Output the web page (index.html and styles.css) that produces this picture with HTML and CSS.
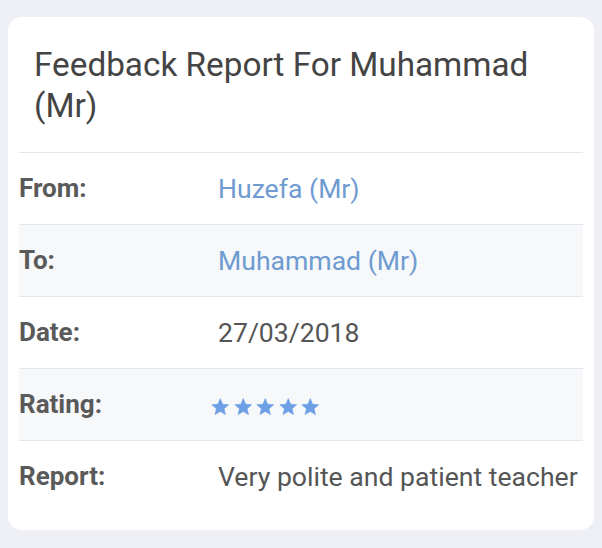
FILE: index.html
```html
<!DOCTYPE html>
<html>
<head>
<meta charset="utf-8">
<link rel="stylesheet" href="styles.css">
</head>
<body>
<div class="card">
  <h1 class="title">Feedback Report For Muhammad (Mr)</h1>
  <table class="details">
    <tr><th>From:</th><td><a class="link">Huzefa (Mr)</a></td></tr>
    <tr class="alt"><th>To:</th><td><a class="link">Muhammad (Mr)</a></td></tr>
    <tr><th>Date:</th><td>27/03/2018</td></tr>
    <tr class="alt"><th>Rating:</th><td>
      <div class="stars">
        <svg class="star" viewBox="0 0 24 23"><path d="M12 .8L15.06 8.09 22.94 8.75 16.95 13.91 18.76 21.6 12 17.5 5.24 21.6 7.05 13.91 1.06 8.75 8.94 8.09Z"/></svg>
        <svg class="star" viewBox="0 0 24 23"><path d="M12 .8L15.06 8.09 22.94 8.75 16.95 13.91 18.76 21.6 12 17.5 5.24 21.6 7.05 13.91 1.06 8.75 8.94 8.09Z"/></svg>
        <svg class="star" viewBox="0 0 24 23"><path d="M12 .8L15.06 8.09 22.94 8.75 16.95 13.91 18.76 21.6 12 17.5 5.24 21.6 7.05 13.91 1.06 8.75 8.94 8.09Z"/></svg>
        <svg class="star" viewBox="0 0 24 23"><path d="M12 .8L15.06 8.09 22.94 8.75 16.95 13.91 18.76 21.6 12 17.5 5.24 21.6 7.05 13.91 1.06 8.75 8.94 8.09Z"/></svg>
        <svg class="star" viewBox="0 0 24 23"><path d="M12 .8L15.06 8.09 22.94 8.75 16.95 13.91 18.76 21.6 12 17.5 5.24 21.6 7.05 13.91 1.06 8.75 8.94 8.09Z"/></svg>
      </div>
    </td></tr>
    <tr><th>Report:</th><td>Very polite and patient teacher</td></tr>
  </table>
</div>
</body>
</html>
```
FILE: styles.css
```css
html, body {
  margin: 0;
  background: #eef0f5;
}
body {
  padding: 17px 8px 16px 8px;
  font-family: Roboto, "Liberation Sans", sans-serif;
  color: #555;
}
.card {
  background: #fff;
  border-radius: 14px;
  padding: 11px 11px 17px 11px;
}
.title {
  margin: 0;
  padding: 16px 15px 26px 15px;
  font-size: 33.3px;
  line-height: 41px;
  font-weight: 400;
  color: #444;
}
.details {
  width: 100%;
  border-collapse: collapse;
  font-size: 26.6px;
  line-height: 39px;
}
.details tr {
  border-top: 1px solid #e4e6ea;
  height: 72px;
}
.details tr.alt {
  background: #f7f8fa;
}
.details th {
  width: 199px;
  padding: 0;
  text-align: left;
  font-size: 26px;
  font-weight: 700;
  color: #5a5a5a;
  vertical-align: middle;
}
.details td {
  padding: 0;
  vertical-align: middle;
  color: #555;
}
.link {
  color: #6f9bd1;
}
.stars {
  display: flex;
  gap: 4px;
  margin-left: -6.7px;
  padding-top: 4px;
}
.star {
  width: 18.5px;
  height: 17.7px;
  fill: #6c9fe4;
  stroke: #6c9fe4;
  stroke-width: 0.8;
  stroke-linejoin: round;
}
```
